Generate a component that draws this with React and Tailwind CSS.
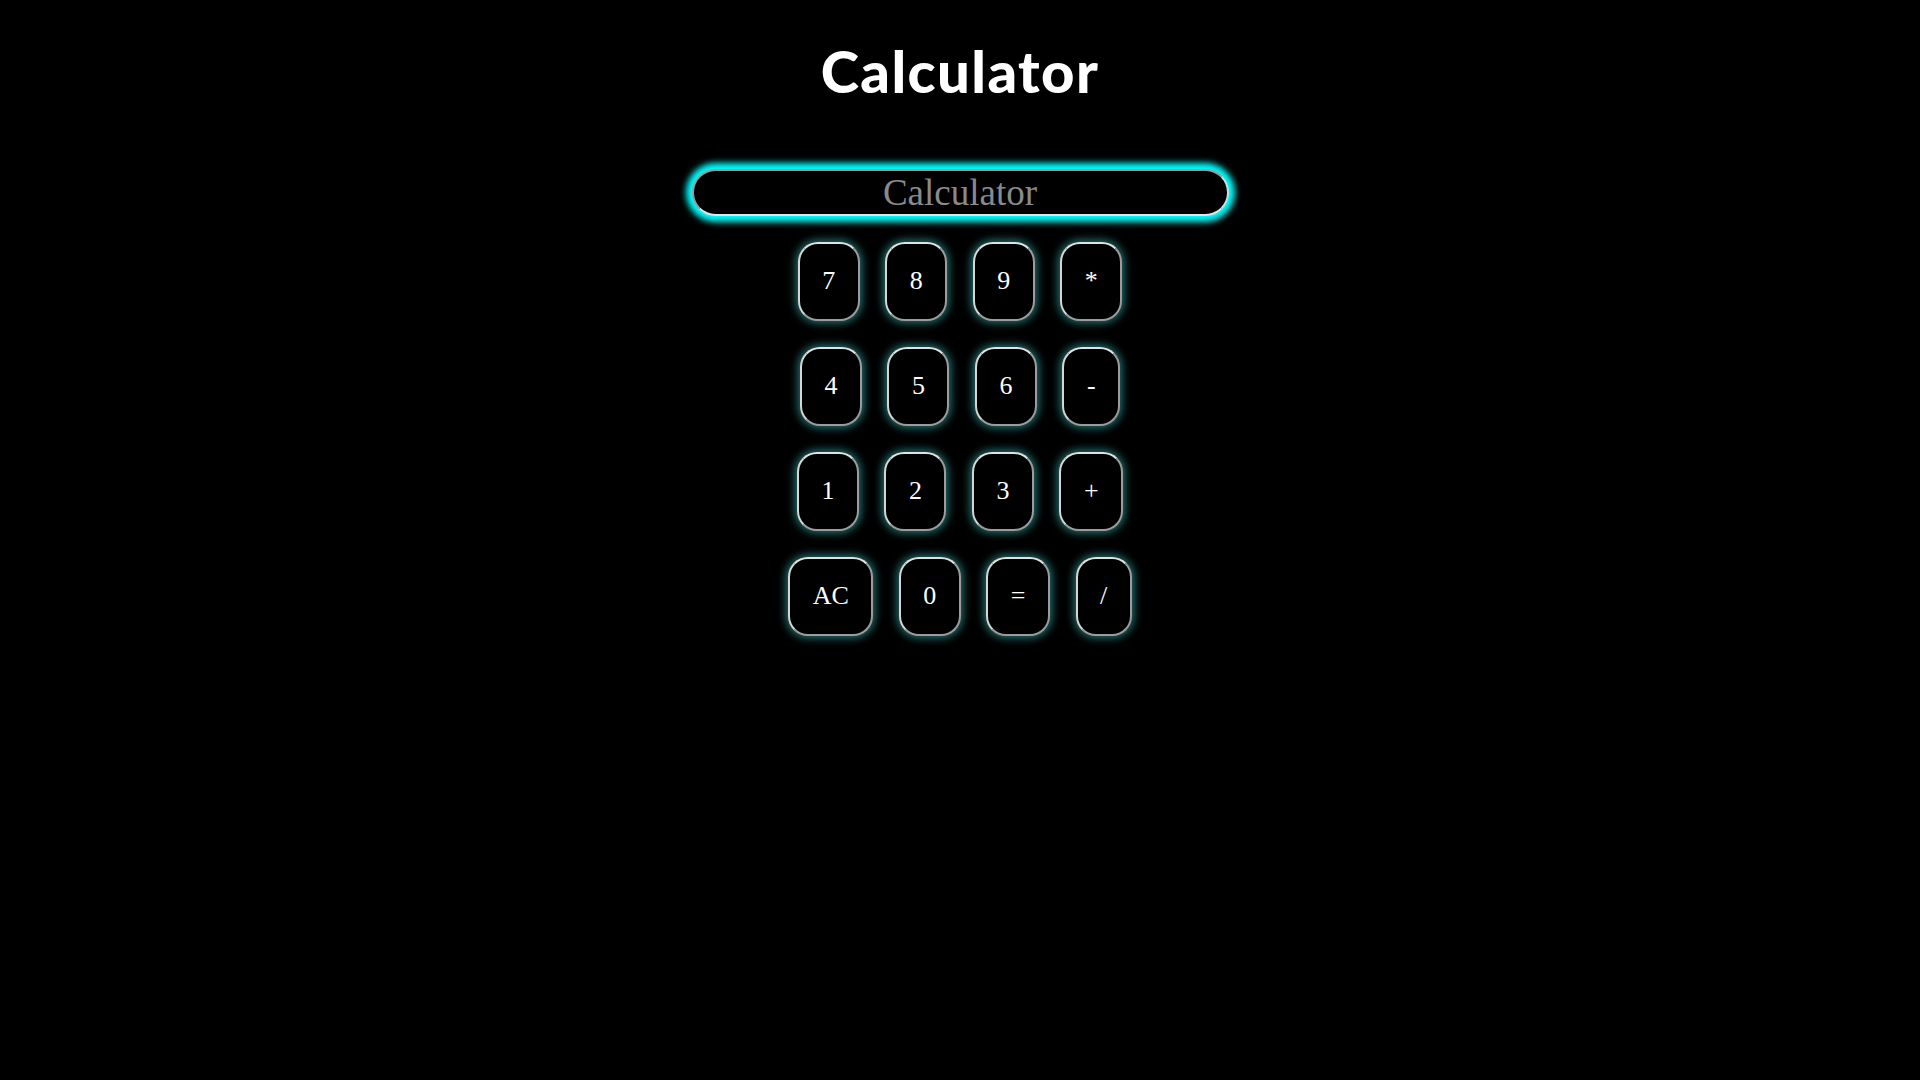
import { useState } from "react";

const ROWS = [
  ["7", "8", "9", "*"],
  ["4", "5", "6", "-"],
  ["1", "2", "3", "+"],
  ["AC", "0", "=", "/"],
];

function KeyButton({ label, onClick }) {
  return (
    <button
      type="button"
      onClick={() => onClick(label)}
      className="flex h-[79px] items-center justify-center rounded-[20px] border-2 border-t-[#e2e2e2] border-l-[#d6d6d6] border-r-[#9c9c9c] border-b-[#9c9c9c] bg-black px-[22.5px] font-['Liberation_Serif',serif] text-[26px] leading-none text-white shadow-[0_0_9px_2px_rgba(64,190,190,0.6)]"
    >
      {label}
    </button>
  );
}

export default function App() {
  const [value, setValue] = useState("");

  const press = (label) => {
    if (label === "AC") {
      setValue("");
      return;
    }
    if (label === "=") {
      try {
        // eslint-disable-next-line no-new-func
        setValue(String(Function(`return (${value})`)()));
      } catch {
        setValue("Error");
      }
      return;
    }
    setValue((current) => current + label);
  };

  return (
    <main className="flex min-h-screen flex-col items-center bg-black">
      <h1 className="mt-[42px] font-['Lato',sans-serif] text-[58px] font-black leading-[58px] tracking-[1.4px] text-white">
        Calculator
      </h1>

      <input
        type="text"
        value={value}
        onChange={(event) => setValue(event.target.value)}
        placeholder="Calculator"
        className="mt-[69px] h-[47px] w-[537px] rounded-full border-2 border-t-[#9a9a9a] border-l-[#9a9a9a] border-r-[#d8d8d8] border-b-[#e4e4e4] bg-black p-0 text-center font-['Liberation_Serif',serif] text-[37px] leading-none text-white shadow-[0_0_6px_6px_#00ffff] outline-none placeholder:text-[#8a8a8a]"
      />

      <div className="mt-[25.5px] flex flex-col items-center gap-[26px]">
        {ROWS.map((row) => (
          <div key={row.join("")} className="flex gap-[25.5px]">
            {row.map((label) => (
              <KeyButton key={label} label={label} onClick={press} />
            ))}
          </div>
        ))}
      </div>
    </main>
  );
}
